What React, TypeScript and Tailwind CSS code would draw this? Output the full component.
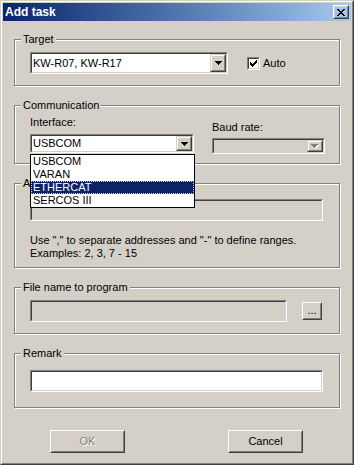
import React from "react";

const X_ROWS = ["XX....XX", ".XX..XX.", "..XXXX..", "...XX...", "..XXXX..", ".XX..XX.", "XX....XX"];
const ARROW_ROWS = ["XXXXXXX", ".XXXXX.", "..XXX..", "...X..."];
const CHECK_ROWS = ["......X", ".....XX", "X...XXX", "XX.XXX.", "XXXXX..", ".XXX...", "..X...."];

function Pix({ rows, color, dx = 0, dy = 0 }: { rows: string[]; color: string; dx?: number; dy?: number }) {
  const out: React.ReactElement[] = [];
  rows.forEach((r, y) =>
    r.split("").forEach((c, x) => {
      if (c === "X") out.push(<rect key={`${x}-${y}`} x={x + dx} y={y + dy} width={1} height={1} fill={color} />);
    })
  );
  return <>{out}</>;
}

function PixIcon({ rows, color, shadow }: { rows: string[]; color: string; shadow?: string }) {
  const w = rows[0].length + (shadow ? 1 : 0);
  const h = rows.length + (shadow ? 1 : 0);
  return (
    <svg width={w} height={h} viewBox={`0 0 ${w} ${h}`} shapeRendering="crispEdges" className="block">
      {shadow && <Pix rows={rows} color={shadow} dx={1} dy={1} />}
      <Pix rows={rows} color={color} />
    </svg>
  );
}

function Raised({ className = "", children }: { className?: string; children?: React.ReactNode }) {
  return (
    <div className={`border border-t-white border-l-white border-r-[#404040] border-b-[#404040] ${className}`}>
      <div className="w-full h-full border border-t-[#D4D0C8] border-l-[#D4D0C8] border-r-[#808080] border-b-[#808080] flex items-center justify-center">
        {children}
      </div>
    </div>
  );
}

function ArrowBtn({ disabled }: { disabled?: boolean }) {
  return (
    <div className="w-[16px] h-full border border-t-[#D4D0C8] border-l-[#D4D0C8] border-r-[#404040] border-b-[#404040]">
      <div className="w-full h-full border border-t-white border-l-white border-r-[#808080] border-b-[#808080] bg-[#D4D0C8] flex items-center justify-center">
        {disabled ? (
          <PixIcon rows={ARROW_ROWS} color="#808080" shadow="#ffffff" />
        ) : (
          <PixIcon rows={ARROW_ROWS} color="#000000" />
        )}
      </div>
    </div>
  );
}

function Sunken({ className = "", disabled, children }: { className?: string; disabled?: boolean; children?: React.ReactNode }) {
  return (
    <div className={`border border-t-[#808080] border-l-[#808080] border-r-white border-b-white ${className}`}>
      <div
        className={`w-full h-full flex border border-t-[#404040] border-l-[#404040] border-r-[#D4D0C8] border-b-[#D4D0C8] ${
          disabled ? "bg-[#D4D0C8]" : "bg-white"
        }`}
      >
        {children}
      </div>
    </div>
  );
}

function Combo({ className = "", value, disabled }: { className?: string; value?: string; disabled?: boolean }) {
  return (
    <Sunken className={className} disabled={disabled}>
      <div className="flex-1 flex items-center pl-[1px] whitespace-nowrap overflow-hidden">{value}</div>
      <ArrowBtn disabled={disabled} />
    </Sunken>
  );
}

function Group({ label, className = "", children }: { label: string; className?: string; children?: React.ReactNode }) {
  return (
    <div
      className={`relative ml-[11px] w-[326px] border border-[#808080] shadow-[inset_1px_1px_0_#ffffff,1px_1px_0_#ffffff] ${className}`}
    >
      <span className="absolute left-[6px] -top-[7px] bg-[#D4D0C8] px-[2px] whitespace-nowrap">{label}</span>
      {children}
    </div>
  );
}

export default function App() {
  const items = ["USBCOM", "VARAN", "ETHERCAT", "SERCOS III"];
  return (
    <div className="w-[354px] h-[465px] bg-[#D4D0C8] border border-t-[#D4D0C8] border-l-[#D4D0C8] border-r-[#404040] border-b-[#404040] font-['Liberation_Sans',Arial,sans-serif] text-[11px] leading-[13px] text-black">
      <div className="w-full h-full border border-t-white border-l-white border-r-[#808080] border-b-[#808080] p-px flex flex-col">
        {/* Title bar */}
        <div className="h-[18px] flex items-center bg-gradient-to-r from-[#0A246A] to-[#A6CAF0] pl-[2px] pr-[2px] shrink-0">
          <span className="flex-1 text-white font-bold text-[12px] leading-[14px]">Add task</span>
          <Raised className="w-[16px] h-[14px]">
            <PixIcon rows={X_ROWS} color="#000000" />
          </Raised>
        </div>

        {/* Target */}
        <Group label="Target" className="mt-[18px] h-[47px] shrink-0">
          <div className="flex items-center pt-[12px] pl-[15px]">
            <Combo className="w-[198px] h-[22px]" value="KW-R07, KW-R17" />
            <div className="ml-[19px] flex items-center">
              <Sunken className="w-[13px] h-[13px]">
                <div className="flex-1 flex items-center justify-center">
                  <PixIcon rows={CHECK_ROWS} color="#000000" />
                </div>
              </Sunken>
              <span className="ml-[3px]">Auto</span>
            </div>
          </div>
        </Group>

        {/* Communication */}
        <Group label="Communication" className="mt-[19px] h-[59px] shrink-0 z-10">
          <div className="flex pt-[10px] pl-[15px]">
            <div className="relative w-[164px] flex flex-col">
              <span>Interface:</span>
              <Combo className="mt-[5px] w-[164px] h-[19px]" value="USBCOM" />
              <div className="absolute left-0 top-full w-[165px] bg-white border border-black z-20">
                {items.map((it) =>
                  it === "ETHERCAT" ? (
                    <div
                      key={it}
                      className="h-[13px] px-[2px] bg-[#0A246A] text-white outline outline-1 outline-dotted outline-[#E8D898] -outline-offset-1"
                    >
                      {it}
                    </div>
                  ) : (
                    <div key={it} className="h-[13px] px-[2px]">
                      {it}
                    </div>
                  )
                )}
              </div>
            </div>
            <div className="ml-[18px] pt-[5px] flex flex-col">
              <span>Baud rate:</span>
              <Combo className="mt-[4px] w-[113px] h-[16px]" disabled />
            </div>
          </div>
        </Group>

        {/* Address */}
        <Group label="Addresses" className="mt-[19px] h-[85px] shrink-0">
          <div className="flex flex-col pt-[15px] pl-[15px]">
            <Sunken className="w-[293px] h-[22px]" disabled />
            <div className="mt-[13px]">Use "," to separate addresses and "-" to define ranges.</div>
            <div>Examples: 2, 3, 7 - 15</div>
          </div>
        </Group>

        {/* File name */}
        <Group label="File name to program" className="mt-[19px] h-[47px] shrink-0">
          <div className="flex items-center pt-[12px] pl-[15px]">
            <Sunken className="w-[257px] h-[22px]" disabled />
            <Raised className="ml-[15px] w-[20px] h-[18px]">
              <span className="leading-[10px] pb-[2px]">...</span>
            </Raised>
          </div>
        </Group>

        {/* Remark */}
        <Group label="Remark" className="mt-[19px] h-[55px] shrink-0">
          <div className="flex pt-[16px] pl-[15px]">
            <Sunken className="w-[293px] h-[22px]" />
          </div>
        </Group>

        {/* Buttons */}
        <div className="flex mt-[22px] pl-[47px] gap-[103px] shrink-0">
          <Raised className="w-[75px] h-[23px]">
            <span className="text-[#808080] [text-shadow:1px_1px_0_#ffffff]">OK</span>
          </Raised>
          <Raised className="w-[75px] h-[23px]">
            <span>Cancel</span>
          </Raised>
        </div>
      </div>
    </div>
  );
}
